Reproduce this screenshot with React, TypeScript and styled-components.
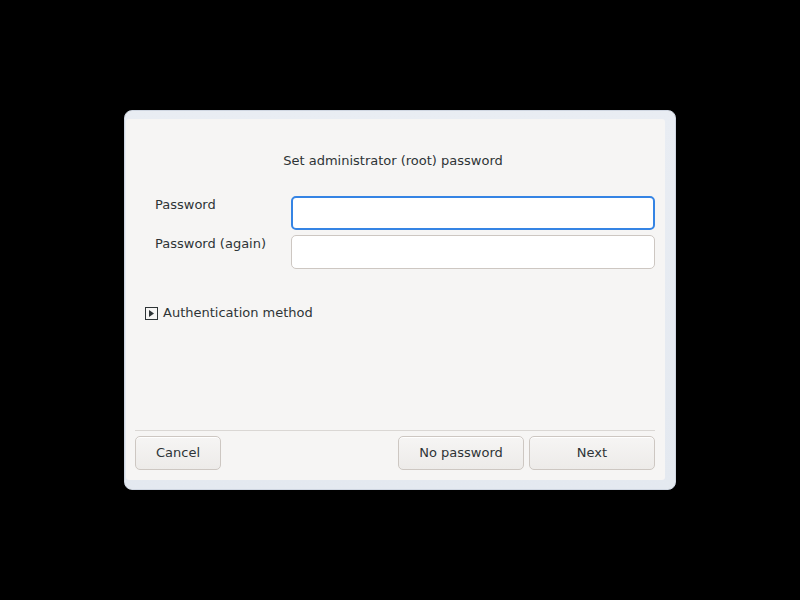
import styled, { createGlobalStyle } from "styled-components";

const GlobalStyle = createGlobalStyle`
    html, body {
        margin: 0;
        padding: 0;
        background: #000;
    }
    body {
        font-family: "DejaVu Sans", "Liberation Sans", sans-serif;
        font-size: 13px;
        color: #2e3436;
    }
`;

const Screen = styled.div`
    width: 800px;
    height: 600px;
    display: flex;
    align-items: center;
    justify-content: center;
`;

const WindowFrame = styled.div`
    width: 552px;
    height: 380px;
    box-sizing: border-box;
    padding: 8px 10px 9px 1px;
    border-radius: 8px;
    border: 1px solid #cfd6e1;
    background: linear-gradient(to bottom, #e9edf3, #e4e9f0);
    display: flex;
`;

const Dialog = styled.div`
    flex: 1;
    background: #f6f5f4;
    border-radius: 3px;
    display: flex;
    flex-direction: column;
    padding: 0 10px 10px 9px;
`;

const Content = styled.div`
    flex: 1;
    display: flex;
    flex-direction: column;
    padding-top: 34px;
`;

const Title = styled.div`
    text-align: center;
    line-height: 16px;
    padding-right: 4px;
`;

const Form = styled.div`
    display: grid;
    grid-template-columns: 136px 1fr;
    grid-auto-rows: 34px;
    row-gap: 5px;
    margin-top: 27px;
    padding-left: 20px;
`;

const Label = styled.label`
    line-height: 16px;
    padding-top: 1px;
`;

const Entry = styled.input<{ $focused?: boolean }>`
    box-sizing: border-box;
    height: 34px;
    border-radius: 5px;
    background: #fff;
    outline: none;
    font: inherit;
    padding: 0 8px;
    margin: 0;
    border: ${(p) => (p.$focused ? "2px solid #3584e4" : "1px solid #cdc7c2")};
`;

const Expander = styled.div`
    display: flex;
    align-items: center;
    gap: 5px;
    margin-top: 36px;
    margin-left: 10px;
    line-height: 16px;
`;

const ArrowBox = styled.span`
    width: 11px;
    height: 11px;
    border: 1px solid #2e3436;
    display: flex;
    align-items: center;
    justify-content: center;
`;

const Separator = styled.div`
    height: 1px;
    background: #dad7d4;
    margin-bottom: 5px;
`;

const Footer = styled.div`
    display: flex;
    gap: 5px;
`;

const Spacer = styled.div`
    flex: 1;
`;

const Button = styled.button<{ $width: number }>`
    box-sizing: border-box;
    width: ${(p) => p.$width}px;
    height: 34px;
    border: 1px solid #cdc7c2;
    border-radius: 5px;
    background: linear-gradient(to bottom, #f6f5f4, #edebe9);
    box-shadow: inset 0 1px #ffffff;
    font: inherit;
    color: #2e3436;
    padding: 0 0 2px 0;
`;

export default function App() {
    return (
        <>
            <GlobalStyle />
            <Screen>
                <WindowFrame>
                    <Dialog>
                        <Content>
                            <Title>Set administrator (root) password</Title>
                            <Form>
                                <Label>Password</Label>
                                <Entry type="password" $focused />
                                <Label>Password (again)</Label>
                                <Entry type="password" />
                            </Form>
                            <Expander>
                                <ArrowBox>
                                    <svg width="5" height="7" viewBox="0 0 5 7">
                                        <path d="M0 0 L5 3.5 L0 7 Z" fill="#2e3436" />
                                    </svg>
                                </ArrowBox>
                                <span>Authentication method</span>
                            </Expander>
                        </Content>
                        <Separator />
                        <Footer>
                            <Button $width={86}>Cancel</Button>
                            <Spacer />
                            <Button $width={126}>No password</Button>
                            <Button $width={126}>Next</Button>
                        </Footer>
                    </Dialog>
                </WindowFrame>
            </Screen>
        </>
    );
}
